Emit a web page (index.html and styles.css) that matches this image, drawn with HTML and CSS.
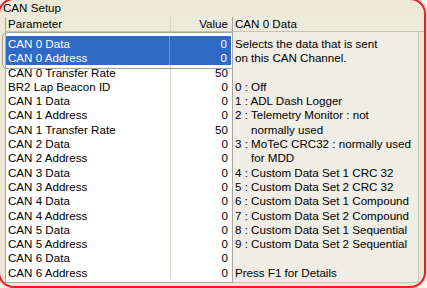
FILE: index.html
```html
<!DOCTYPE html>
<html lang="en">
<head>
  <meta charset="UTF-8" />
  <title>CAN Setup</title>
  <link rel="stylesheet" href="styles.css">
</head>
<body>
  <div class="frame">
    <div class="title">CAN Setup</div>

    <div class="panes">
      <!-- parameter list -->
      <div class="list">
        <div class="head">
          <div class="cell name">Parameter</div>
          <div class="cell value">Value</div>
        </div>
        <div class="rows">
          <div class="selected">
            <div class="row"><div class="cell name">CAN 0 Data</div><div class="cell value">0</div></div>
            <div class="row"><div class="cell name">CAN 0 Address</div><div class="cell value">0</div></div>
          </div>
          <div class="row"><div class="cell name">CAN 0 Transfer Rate</div><div class="cell value">50</div></div>
          <div class="row"><div class="cell name">BR2 Lap Beacon ID</div><div class="cell value">0</div></div>
          <div class="row"><div class="cell name">CAN 1 Data</div><div class="cell value">0</div></div>
          <div class="row"><div class="cell name">CAN 1 Address</div><div class="cell value">0</div></div>
          <div class="row"><div class="cell name">CAN 1 Transfer Rate</div><div class="cell value">50</div></div>
          <div class="row"><div class="cell name">CAN 2 Data</div><div class="cell value">0</div></div>
          <div class="row"><div class="cell name">CAN 2 Address</div><div class="cell value">0</div></div>
          <div class="row"><div class="cell name">CAN 3 Data</div><div class="cell value">0</div></div>
          <div class="row"><div class="cell name">CAN 3 Address</div><div class="cell value">0</div></div>
          <div class="row"><div class="cell name">CAN 4 Data</div><div class="cell value">0</div></div>
          <div class="row"><div class="cell name">CAN 4 Address</div><div class="cell value">0</div></div>
          <div class="row"><div class="cell name">CAN 5 Data</div><div class="cell value">0</div></div>
          <div class="row"><div class="cell name">CAN 5 Address</div><div class="cell value">0</div></div>
          <div class="row"><div class="cell name">CAN 6 Data</div><div class="cell value">0</div></div>
          <div class="row"><div class="cell name">CAN 6 Address</div><div class="cell value">0</div></div>
        </div>
      </div>

      <!-- help text for the selected parameter -->
      <div class="help">
        <div class="head"><div class="cell">CAN 0 Data</div></div>
        <div class="help-body">
          <div class="line">Selects the data that is sent</div>
          <div class="line">on this CAN Channel.</div>
          <div class="line"></div>
          <div class="line">0 : Off</div>
          <div class="line">1 : ADL Dash Logger</div>
          <div class="line">2 : Telemetry Monitor : not</div>
          <div class="line indent">normally used</div>
          <div class="line">3 : MoTeC CRC32 : normally used</div>
          <div class="line indent">for MDD</div>
          <div class="line">4 : Custom Data Set 1 CRC 32</div>
          <div class="line">5 : Custom Data Set 2 CRC 32</div>
          <div class="line">6 : Custom Data Set 1 Compound</div>
          <div class="line">7 : Custom Data Set 2 Compound</div>
          <div class="line">8 : Custom Data Set 1 Sequential</div>
          <div class="line">9 : Custom Data Set 2 Sequential</div>
          <div class="line"></div>
          <div class="line">Press F1 for Details</div>
        </div>
      </div>
    </div>
  </div>
</body>
</html>
```

FILE: styles.css
```css
:root {
  --window-bg: #ece9d8;
  --pane-bg: #efede4;
  --header-bg: #ebeadb;
  --border: #a7a6a0;
  --divider: #d6d3c6;
  --select: #316ac5;
  --red: #e42222;
  --row-h: 14.3px;
}

* {
  box-sizing: border-box;
  margin: 0;
  padding: 0;
}

body {
  background: #fff;
  font-family: "Liberation Sans", Arial, sans-serif;
  font-size: 11.6px;
  color: #000;
  overflow: hidden;
}

/* red rounded highlight round the whole window */
.frame {
  margin: -2px 0 0 -2px;
  width: 428px;
  height: 290px;
  border: 2px solid var(--red);
  border-radius: 16px;
  box-shadow: 0 0 3px 1px rgba(255, 120, 120, 0.6);
  background: var(--window-bg);
  overflow: hidden;
}

.title {
  height: 17px;
  line-height: 16px;
  padding-left: 3px;
}

.panes {
  display: flex;
  margin-left: 5px;
}

.head {
  display: flex;
  height: 15px;
  background: var(--header-bg);
  border-bottom: 1px solid #c5c2b2;
  line-height: 14px;
}

.head .cell {
  padding-left: 3px;
}

.head .value {
  padding-left: 0;
  border-left: 1px solid var(--divider);
}

.list {
  width: 227px;
}

.list .head {
  border-left: 1px solid var(--border);
}

.rows {
  background: #fff;
  border-left: 1px solid var(--border);
  border-bottom: 1px solid var(--border);
  height: 251px;
  padding-top: 4px;
}

.row {
  display: flex;
  height: var(--row-h);
  line-height: calc(var(--row-h) + 1px);
}

.cell.name {
  width: 164px;
  padding-left: 2px;
}

.cell.value {
  width: 62px;
  text-align: right;
  padding-right: 4px;
  border-left: 1px solid var(--divider);
}

.selected {
  background: var(--select);
  color: #fff;
  margin-right: 1px;
  border-radius: 1px;
  outline: 1px solid #a3a3a3;
  outline-offset: 3px;
}

.selected .cell.value {
  border-left-color: #6f93d2;
}

.help {
  width: 192px;
  border-left: 1px solid var(--border);
}

.help .head .cell {
  padding-left: 2px;
}

.help-body {
  background: var(--pane-bg);
  margin-right: 5px;
  height: 251px;
  border-right: 1px solid #c9c6b8;
  border-bottom: 1px solid #c9c6b8;
  border-bottom-right-radius: 3px;
  padding: 4px 0 0 2px;
}

.line {
  height: var(--row-h);
  line-height: calc(var(--row-h) + 1px);
  white-space: nowrap;
}

.line.indent {
  padding-left: 16px;
}
```
